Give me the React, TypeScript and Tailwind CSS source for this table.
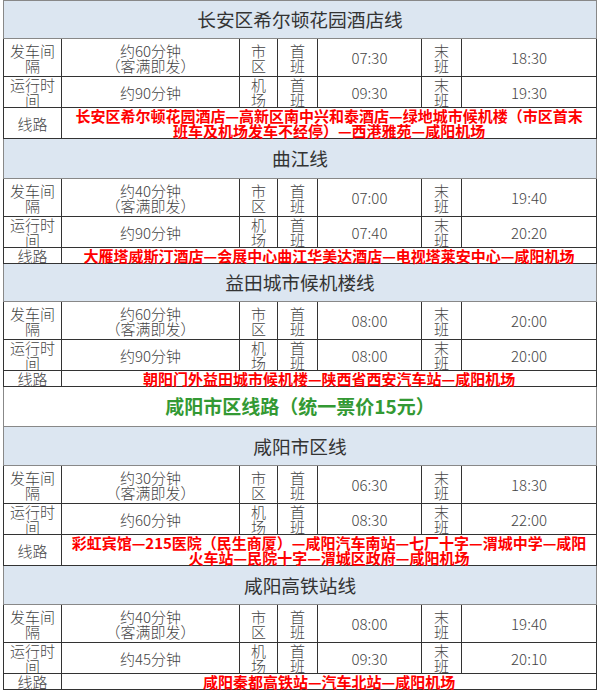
import React from 'react';

type Line = {
  title: string;
  interval: [string, string | null];
  duration: string;
  cityFirst: string;
  cityLast: string;
  airportFirst: string;
  airportLast: string;
  route: string[];
  headerH: string;
};

const lines: Line[] = [
  {
    title: '长安区希尔顿花园酒店线',
    interval: ['约60分钟', '（客满即发）'],
    duration: '约90分钟',
    cityFirst: '07:30',
    cityLast: '18:30',
    airportFirst: '09:30',
    airportLast: '19:30',
    route: ['长安区希尔顿花园酒店—高新区南中兴和泰酒店—绿地城市候机楼（市区首末', '班车及机场发车不经停）—西港雅苑—咸阳机场'],
    headerH: 'h-[38px]',
  },
  {
    title: '曲江线',
    interval: ['约40分钟', '（客满即发）'],
    duration: '约90分钟',
    cityFirst: '07:00',
    cityLast: '19:40',
    airportFirst: '07:40',
    airportLast: '20:20',
    route: ['大雁塔威斯汀酒店—会展中心曲江华美达酒店—电视塔莱安中心—咸阳机场'],
    headerH: 'h-[40px]',
  },
  {
    title: '益田城市候机楼线',
    interval: ['约60分钟', '（客满即发）'],
    duration: '约90分钟',
    cityFirst: '08:00',
    cityLast: '20:00',
    airportFirst: '08:00',
    airportLast: '20:00',
    route: ['朝阳门外益田城市候机楼—陕西省西安汽车站—咸阳机场'],
    headerH: 'h-[38px]',
  },
];

const xianyang: Line[] = [
  {
    title: '咸阳市区线',
    interval: ['约30分钟', '（客满即发）'],
    duration: '约60分钟',
    cityFirst: '06:30',
    cityLast: '18:30',
    airportFirst: '08:30',
    airportLast: '22:00',
    route: ['彩虹宾馆—215医院（民生商厦）—咸阳汽车南站—七厂十字—渭城中学—咸阳', '火车站—民院十字—渭城区政府—咸阳机场'],
    headerH: 'h-[39px]',
  },
  {
    title: '咸阳高铁站线',
    interval: ['约40分钟', '（客满即发）'],
    duration: '约45分钟',
    cityFirst: '08:00',
    cityLast: '19:40',
    airportFirst: '09:30',
    airportLast: '20:10',
    route: ['咸阳秦都高铁站—汽车北站—咸阳机场'],
    headerH: 'h-[39px]',
  },
];

// plain grid cell; 15px lines like the original table
const cell = 'border border-[#333] p-0 align-middle text-center leading-[15px] text-[15px] font-light text-[#444]';

const Two = ({ a, b }: { a: string; b?: string | null }) => (
  <>
    <div>{a}</div>
    {b ? <div>{b}</div> : null}
  </>
);

const Section = ({ line }: { line: Line }) => (
  <>
    <tr>
      <td
        colSpan={7}
        className={`${line.headerH} border border-[#888] bg-[#dce6f1] p-0 text-center align-middle text-[18.7px] text-[#333]`}
      >
        {line.title}
      </td>
    </tr>
    <tr>
      <td className={`${cell} h-[38px]`}>
        <Two a="发车间" b="隔" />
      </td>
      <td className={cell}>
        <Two a={line.interval[0]} b={line.interval[1]} />
      </td>
      <td className={cell}>
        <Two a="市" b="区" />
      </td>
      <td className={cell}>
        <Two a="首" b="班" />
      </td>
      <td className={cell}>{line.cityFirst}</td>
      <td className={cell}>
        <Two a="末" b="班" />
      </td>
      <td className={cell}>{line.cityLast}</td>
    </tr>
    <tr>
      <td className={`${cell} h-[31px]`}>
        <Two a="运行时" b="间" />
      </td>
      <td className={cell}>{line.duration}</td>
      <td className={cell}>
        <Two a="机" b="场" />
      </td>
      <td className={cell}>
        <Two a="首" b="班" />
      </td>
      <td className={cell}>{line.airportFirst}</td>
      <td className={cell}>
        <Two a="末" b="班" />
      </td>
      <td className={cell}>{line.airportLast}</td>
    </tr>
    <tr>
      <td className={`${cell} ${line.route.length > 1 ? 'h-[31px]' : 'h-[16px]'}`}>线路</td>
      <td colSpan={6} className={`${cell} !font-bold !text-[#ff0000]`}>
        {line.route.map((r) => (
          <div key={r}>{r}</div>
        ))}
      </td>
    </tr>
  </>
);

export default function App() {
  return (
    <div
      className="w-[600px] h-[695px] bg-white overflow-hidden"
      style={{ fontFamily: '"Noto Sans CJK SC", "Noto Sans", sans-serif' }}
    >
      <table className="table-fixed border-collapse w-[593px] ml-[3px]">
        <colgroup>
          <col className="w-[58px]" />
          <col className="w-[178px]" />
          <col className="w-[38px]" />
          <col className="w-[40px]" />
          <col className="w-[104px]" />
          <col className="w-[40px]" />
          <col className="w-[135px]" />
        </colgroup>
        <tbody>
          {lines.map((l) => (
            <Section key={l.title} line={l} />
          ))}
          <tr>
            <td
              colSpan={7}
              className="h-[40px] border border-[#888] bg-white p-0 text-center align-middle text-[19px] font-bold text-[#339933]"
            >
              咸阳市区线路（统一票价15元）
            </td>
          </tr>
          {xianyang.map((l) => (
            <Section key={l.title} line={l} />
          ))}
        </tbody>
      </table>
    </div>
  );
}
